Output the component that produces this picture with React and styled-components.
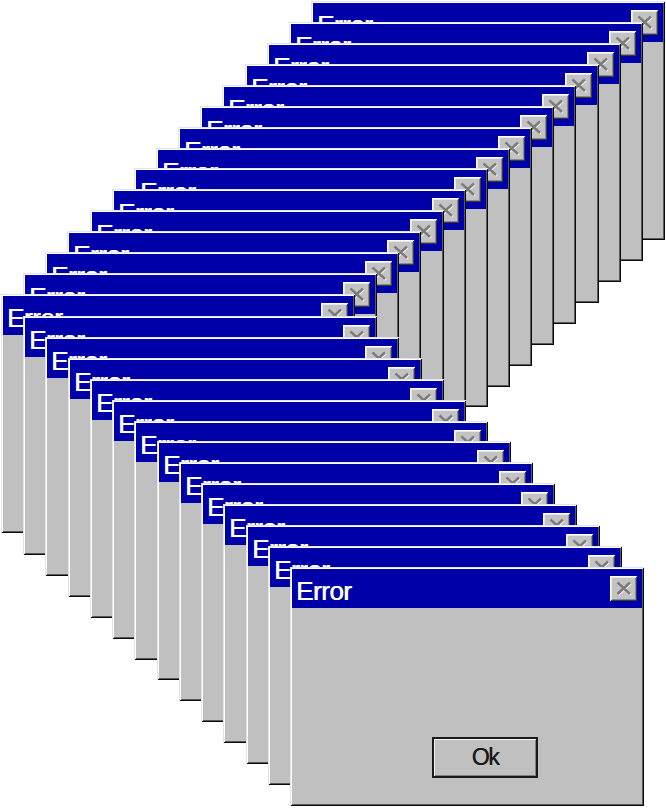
import React from "react";
import styled, { createGlobalStyle } from "styled-components";

const Global = createGlobalStyle`
  html, body { margin: 0; padding: 0; background: #ffffff; }
  body { font-family: "Liberation Sans", Arial, sans-serif; }
`;

const Desktop = styled.div`
  position: relative;
  width: 666px;
  height: 809px;
  overflow: hidden;
  background: #ffffff;
`;

const Win = styled.div`
  position: absolute;
  width: 354px;
  height: 239px;
  box-sizing: border-box;
  padding: 2px 2px 2px 2px;
  background: #c0c0c0;
  display: flex;
  flex-direction: column;
  box-shadow:
    inset 1px 1px #e4e4e4,
    inset -1px -1px #0a0a0a,
    inset 2px 2px #ffffff,
    inset -2px -2px #5a5a5a;
`;

const TitleBar = styled.div`
  height: 39px;
  flex: none;
  background: #0000a8;
  display: flex;
  align-items: center;
  justify-content: space-between;
  padding: 0 5px 0 4px;
`;

const Title = styled.span`
  color: #ffffff;
  font-family: "Liberation Sans", Arial, sans-serif;
  font-size: 26px;
  line-height: 1;
  letter-spacing: -0.5px;
  text-shadow: 0.6px 0 0 #ffffff;
  margin-top: 5px;
`;

const CloseButton = styled.div`
  width: 27px;
  height: 25px;
  box-sizing: border-box;
  background: #c3c3c3;
  display: flex;
  align-items: center;
  justify-content: center;
  box-shadow:
    inset 1px 1px #ffffff,
    inset -1px -1px #3a3a3a,
    inset 2px 2px #e8e8e8,
    inset -2px -2px #8a8a8a;
`;

const Body = styled.div`
  flex: 1;
  display: flex;
  align-items: flex-end;
  padding: 0 0 26px 140px;
`;

const OkButton = styled.div`
  width: 106px;
  height: 41px;
  box-sizing: border-box;
  border: 2px solid #1a1a1a;
  background: #c0c0c0;
  box-shadow: inset 1px 1px #f4f4f4, inset -1px -1px #808080;
  display: flex;
  align-items: center;
  justify-content: center;
  font-family: "Liberation Sans", Arial, sans-serif;
  font-size: 23px;
  color: #1a1a1a;
  letter-spacing: -1.5px;
  text-shadow: 0.3px 0 0 #1a1a1a;
`;

const CloseX = () => (
  <svg width="18" height="15" viewBox="0 0 18 15">
    <path d="M2.5 1.5 L15 13 M15 1.5 L2.5 13" stroke="#f4f4f4" strokeWidth="2.4" transform="translate(0.8 0.8)" />
    <path d="M2.5 1.5 L15 13 M15 1.5 L2.5 13" stroke="#7a7a7a" strokeWidth="2.4" />
  </svg>
);

const ErrorWindow = ({ left, top }) => (
  <Win style={{ left, top }}>
    <TitleBar>
      <Title>Error</Title>
      <CloseButton>
        <CloseX />
      </CloseButton>
    </TitleBar>
    <Body>
      <OkButton>Ok</OkButton>
    </Body>
  </Win>
);

const upper = Array.from({ length: 15 }, (_, i) => ({
  left: Math.round(311 - i * 22.14),
  top: Math.round(1 + i * 20.93),
}));
const lower = Array.from({ length: 13 }, (_, j) => ({
  left: Math.round(1 + (j + 1) * 22.23),
  top: Math.round(295 + (j + 1) * 20.92),
}));
const windows = [...upper, ...lower];

export default function App() {
  return (
    <Desktop>
      <Global />
      {windows.map((w, i) => (
        <ErrorWindow key={i} left={w.left} top={w.top} />
      ))}
    </Desktop>
  );
}
